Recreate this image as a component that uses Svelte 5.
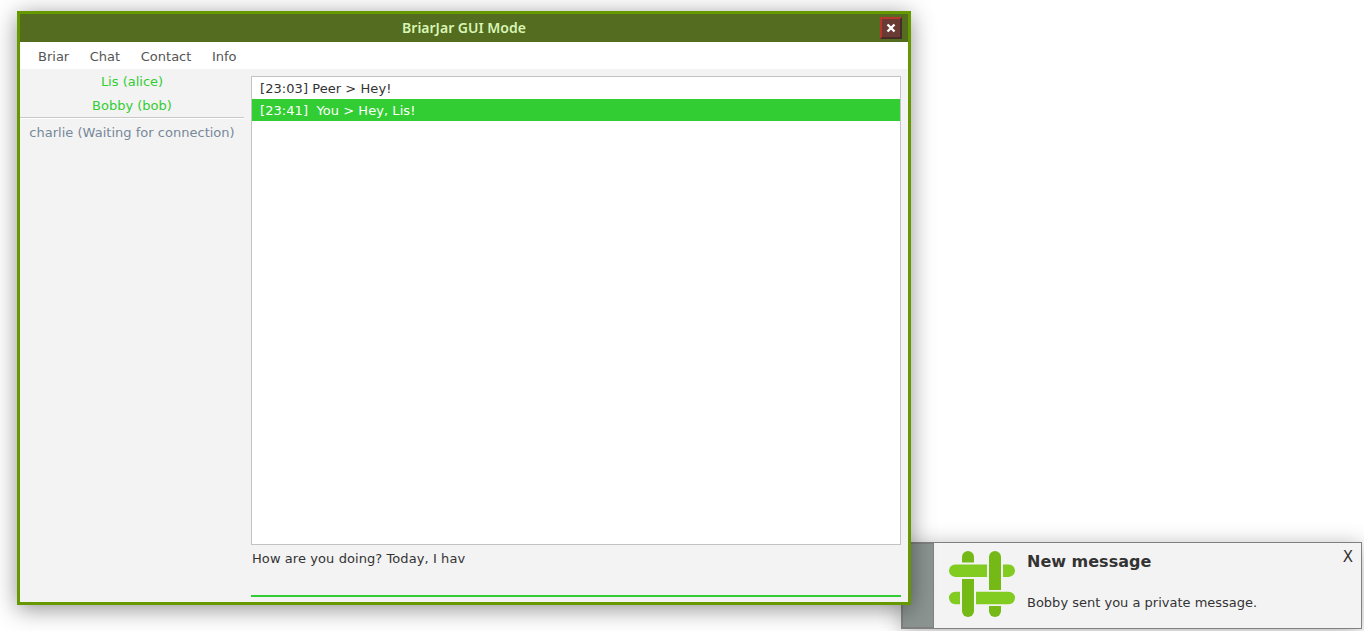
<script>
  const menus = ['Briar', 'Chat', 'Contact', 'Info'];
  const contacts = ['Lis (alice)', 'Bobby (bob)'];
  const messages = [
    { text: '[23:03] Peer > Hey!', selected: false },
    { text: '[23:41]  You > Hey, Lis!', selected: true }
  ];
</script>

<div class="desktop">
  <aside class="toast">
    <div class="strip"></div>
    <svg class="logo" width="66" height="66" viewBox="0 0 66 66">
      <g fill="#75b916">
        <path d="M13 11.500V6a6 6 0 0 1 12 0v5.500z" />
        <path d="M13 28h12v32a6 6 0 0 1-12 0z" />
        <path d="M40 39V6a6 6 0 0 1 12 0v33z" />
        <path d="M40 55h12v5a6 6 0 0 1-12 0z" />
      </g>
      <g fill="#82cb20">
        <path d="M38 13.500H6.200a6.200 6.200 0 0 0 0 12.400H38z" />
        <path d="M54 13.500h5.800a6.200 6.200 0 0 1 0 12.400H54z" />
        <path d="M11 40.800H6.200a6.200 6.200 0 0 0 0 12.400H11z" />
        <path d="M27 40.800h32.800a6.200 6.200 0 0 1 0 12.400H27z" />
      </g>
    </svg>
    <div class="note">
      <h2>New message</h2>
      <p>Bobby sent you a private message.</p>
    </div>
    <span class="dismiss">X</span>
  </aside>

  <main class="window">
    <header>
      <h1>BriarJar GUI Mode</h1>
      <button aria-label="Close">
        <svg width="10" height="10" viewBox="0 0 10 10">
          <path d="M1.500 1.500l7 7M8.500 1.500l-7 7" stroke="#fff" stroke-width="2.400" />
        </svg>
      </button>
    </header>
    <nav>
      {#each menus as menu}<span>{menu}</span>{/each}
    </nav>
    <div class="body">
      <section class="contacts">
        {#each contacts as contact}<div class="contact">{contact}</div>{/each}
        <div class="rule"></div>
        <div class="pending">charlie (Waiting for connection)</div>
      </section>
      <section class="chat">
        <div class="messages">
          {#each messages as message}
            <div class="message" class:selected={message.selected}>{message.text}</div>
          {/each}
        </div>
        <div class="input">How are you doing? Today, I hav</div>
      </section>
    </div>
  </main>
</div>

<style>
  :global(body) { background: #fff; }
  .desktop {
    position: relative;
    width: 1364px;
    height: 631px;
    overflow: hidden;
    background: #fff;
    font: 13px/22px "DejaVu Sans", sans-serif;
    color: #333;
  }
  .desktop * { box-sizing: border-box; }
  .window {
    position: absolute;
    left: 17px;
    top: 11px;
    width: 894px;
    height: 594px;
    display: flex;
    flex-direction: column;
    border: 3px solid #669900;
    background: #f3f3f3;
    box-shadow: 0 4px 22px rgba(0, 0, 0, 0.43);
  }
  header {
    display: grid;
    grid-template-columns: 28px 1fr 28px;
    align-items: center;
    height: 28px;
    background: #536c20;
  }
  h1 {
    grid-column: 2;
    margin: 0;
    text-align: center;
    font: 600 14px/28px "Noto Sans", sans-serif;
    color: #d9f5b5;
  }
  button {
    display: flex;
    align-items: center;
    justify-content: center;
    width: 22px;
    height: 22px;
    padding: 0;
    border: 2px solid;
    border-color: #b9362c #482a27 #482a27 #b9362c;
    background: #693b34;
  }
  nav {
    display: flex;
    gap: 20.6px;
    height: 27px;
    padding: 0 18px;
    background: #fff;
    line-height: 29px;
    color: #555;
  }
  .body { display: flex; flex: 1; }
  .contacts { width: 224px; text-align: center; }
  .contact { height: 24px; line-height: 25px; color: #32cd32; }
  .rule { height: 2px; background: #c8c8c8; border-bottom: 1px solid #fff; }
  .pending { line-height: 27px; color: #778899; letter-spacing: 0.02px; }
  .chat { display: flex; flex-direction: column; width: 650px; margin: 7px 0 0 7px; }
  .messages { height: 469px; border: 1px solid #c3c3c3; background: #fff; }
  .message { height: 22px; line-height: 24px; padding-left: 8px; white-space: pre; letter-spacing: 0.06px; }
  .selected { background: #32cd32; color: #fff; }
  .input {
    height: 52px;
    padding-left: 1px;
    line-height: 27px;
    letter-spacing: 0.08px;
    border-bottom: 2px solid #32cd32;
  }
  .toast {
    position: absolute;
    left: 901px;
    top: 542px;
    width: 461px;
    height: 87px;
    display: flex;
    border: 1px solid #808080;
    background: #f3f3f3;
    box-shadow: 0 3px 20px rgba(0, 0, 0, 0.3);
  }
  .strip { width: 32px; background: #8b9491; border: 1px solid #808080; }
  .logo { flex: none; margin: 8px 12px 0 15px; }
  .note { flex: 1; padding-top: 8px; }
  h2 { margin: 0; font-size: 16px; line-height: 22px; }
  p { margin: 19px 0 0; line-height: 22px; }
  .dismiss { margin-right: 8px; font-size: 15px; line-height: 28px; }
</style>
